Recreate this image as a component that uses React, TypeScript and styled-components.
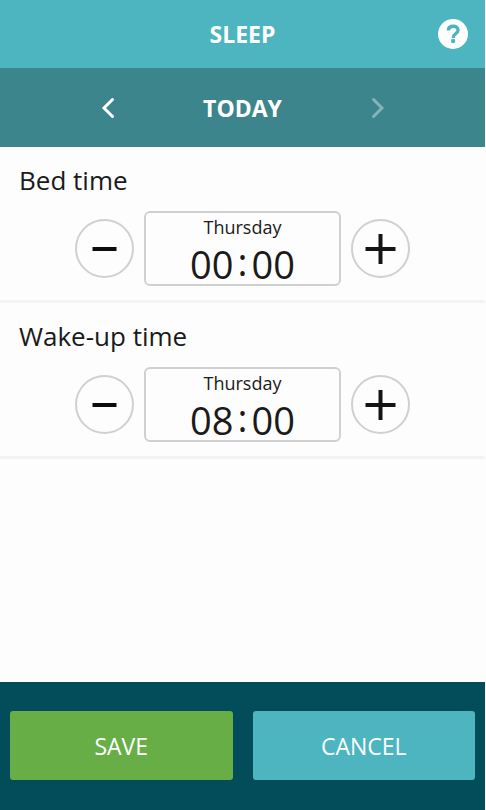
import React, { useState } from "react";
import styled, { createGlobalStyle } from "styled-components";

const GlobalStyle = createGlobalStyle`
  *, *::before, *::after { box-sizing: border-box; }
  body {
    margin: 0;
    background: #fdfdfd;
    color: #1a1a1a;
    font-family: "Segoe UI", "Open Sans", "Noto Sans", sans-serif;
  }
  button { font: inherit; color: inherit; cursor: pointer; }
  button:disabled { cursor: default; }
`;

const Page = styled.div`
  display: flex;
  flex-direction: column;
  min-height: 100vh;
  padding-right: 1px;
`;

const Header = styled.header`
  display: grid;
  grid-template-columns: 1fr auto 1fr;
  align-items: center;
  height: 68px;
  padding: 0 17px;
  background: #4cb5bf;
  color: #fff;
`;

const Title = styled.h1`
  grid-column: 2;
  margin: 0;
  font-size: 23px;
  line-height: 32px;
  font-weight: 700;
`;

const IconButton = styled.button`
  display: flex;
  padding: 0;
  border: 0;
  background: none;
  color: #fff;
  &:disabled { color: #86b3b8; }
`;

const HelpButton = styled(IconButton)`
  grid-column: 3;
  justify-self: end;
`;

const DayBar = styled.nav`
  display: grid;
  grid-template-columns: 1fr 256px 1fr;
  align-items: center;
  height: 79px;
  background: #3c858d;
  color: #fff;
`;

const PreviousDay = styled(IconButton)`
  justify-self: end;
`;

const Day = styled.h2`
  margin: 0;
  text-align: center;
  font-size: 23px;
  line-height: 32px;
  font-weight: 700;
`;

const Content = styled.main`
  flex: 1;
`;

const Section = styled.section`
  height: 156px;
  padding: 16px 19px 0;
  border-bottom: 3px solid #f3f3f3;
`;

const Label = styled.h3`
  margin: 0 0 14px;
  font-size: 26px;
  line-height: 34px;
  font-weight: 400;
`;

const Stepper = styled.div`
  display: flex;
  justify-content: center;
  align-items: center;
  gap: 10px;
`;

const StepButton = styled.button`
  display: flex;
  align-items: center;
  justify-content: center;
  width: 59px;
  height: 59px;
  padding: 0;
  border: 2px solid #d0d0d0;
  border-radius: 50%;
  background: none;
`;

const TimeBox = styled.button`
  display: flex;
  flex-direction: column;
  align-items: center;
  width: 197px;
  height: 75px;
  padding: 1px 0 0;
  border: 2px solid #d0d0d0;
  border-radius: 6px;
  background: none;
`;

const Weekday = styled.span`
  font-size: 18px;
  line-height: 26px;
`;

const Time = styled.span`
  display: grid;
  grid-template-columns: 1fr 18px 1fr;
  font-size: 38px;
  line-height: 48px;
`;

const Colon = styled.span`
  text-align: center;
  line-height: 42px;
`;

const Footer = styled.footer`
  display: grid;
  grid-template-columns: 1fr 1fr;
  gap: 20px;
  padding: 29px 10px 30px;
  background: #034c5a;
`;

const ActionButton = styled.button<{ $color: string }>`
  height: 69px;
  padding: 0;
  border: 0;
  border-radius: 3px;
  background: ${(p) => p.$color};
  && { color: #fff; }
  font-size: 23px;
  line-height: 32px;
`;

const HelpIcon = () => (
  <svg width="30" height="30" viewBox="0 0 30 30" aria-hidden="true">
    <circle cx="15" cy="15" r="15" fill="#fff" />
    <path
      d="M10.4 11.4C10.4 8.6 12.4 7.2 15.2 7.2S20 8.8 20 11.2C20 14.6 15.2 14.6 15.2 19"
      fill="none"
      stroke="#4cb5bf"
      strokeWidth="3.4"
    />
    <circle cx="15.1" cy="22" r="2.2" fill="#4cb5bf" />
  </svg>
);

const Chevron = ({ next = false }: { next?: boolean }) => (
  <svg width="14" height="22" viewBox="0 0 14 22" aria-hidden="true">
    <path
      d={next ? "M2.5 2.5L11 11L2.5 19.5" : "M11.5 2.5L3 11L11.5 19.5"}
      fill="none"
      stroke="currentColor"
      strokeWidth="3"
      strokeLinecap="round"
    />
  </svg>
);

const MinusIcon = () => (
  <svg width="31" height="31" viewBox="0 0 31 31" aria-hidden="true">
    <path d="M3.5 16H27.5" stroke="#0c0c0c" strokeWidth="4" />
  </svg>
);

const PlusIcon = () => (
  <svg width="31" height="31" viewBox="0 0 31 31" aria-hidden="true">
    <path d="M0.5 16H30.5M15.5 1V31" stroke="#141414" strokeWidth="4" />
  </svg>
);

const DAY = 24 * 60;
const STEP = 15;
const pad = (n: number) => String(n).padStart(2, "0");

function TimeSetting({ label, initial }: { label: string; initial: number }) {
  const [minutes, setMinutes] = useState(initial);
  const move = (delta: number) => setMinutes((m) => (m + delta + DAY) % DAY);
  return (
    <Section aria-label={label}>
      <Label>{label}</Label>
      <Stepper>
        <StepButton type="button" aria-label={`${label} earlier`} onClick={() => move(-STEP)}>
          <MinusIcon />
        </StepButton>
        <TimeBox type="button">
          <Weekday>Thursday</Weekday>
          <Time>
            <span>{pad(Math.floor(minutes / 60))}</span>
            <Colon>:</Colon>
            <span>{pad(minutes % 60)}</span>
          </Time>
        </TimeBox>
        <StepButton type="button" aria-label={`${label} later`} onClick={() => move(STEP)}>
          <PlusIcon />
        </StepButton>
      </Stepper>
    </Section>
  );
}

export default function App() {
  return (
    <>
      <GlobalStyle />
      <Page>
        <Header>
          <Title>SLEEP</Title>
          <HelpButton type="button" aria-label="Help">
            <HelpIcon />
          </HelpButton>
        </Header>
        <DayBar aria-label="Day">
          <PreviousDay type="button" aria-label="Previous day">
            <Chevron />
          </PreviousDay>
          <Day>TODAY</Day>
          <IconButton type="button" aria-label="Next day" disabled>
            <Chevron next />
          </IconButton>
        </DayBar>
        <Content>
          <TimeSetting label="Bed time" initial={0} />
          <TimeSetting label="Wake-up time" initial={480} />
        </Content>
        <Footer>
          <ActionButton type="button" $color="#68ae47">SAVE</ActionButton>
          <ActionButton type="button" $color="#4cb5bf">CANCEL</ActionButton>
        </Footer>
      </Page>
    </>
  );
}
